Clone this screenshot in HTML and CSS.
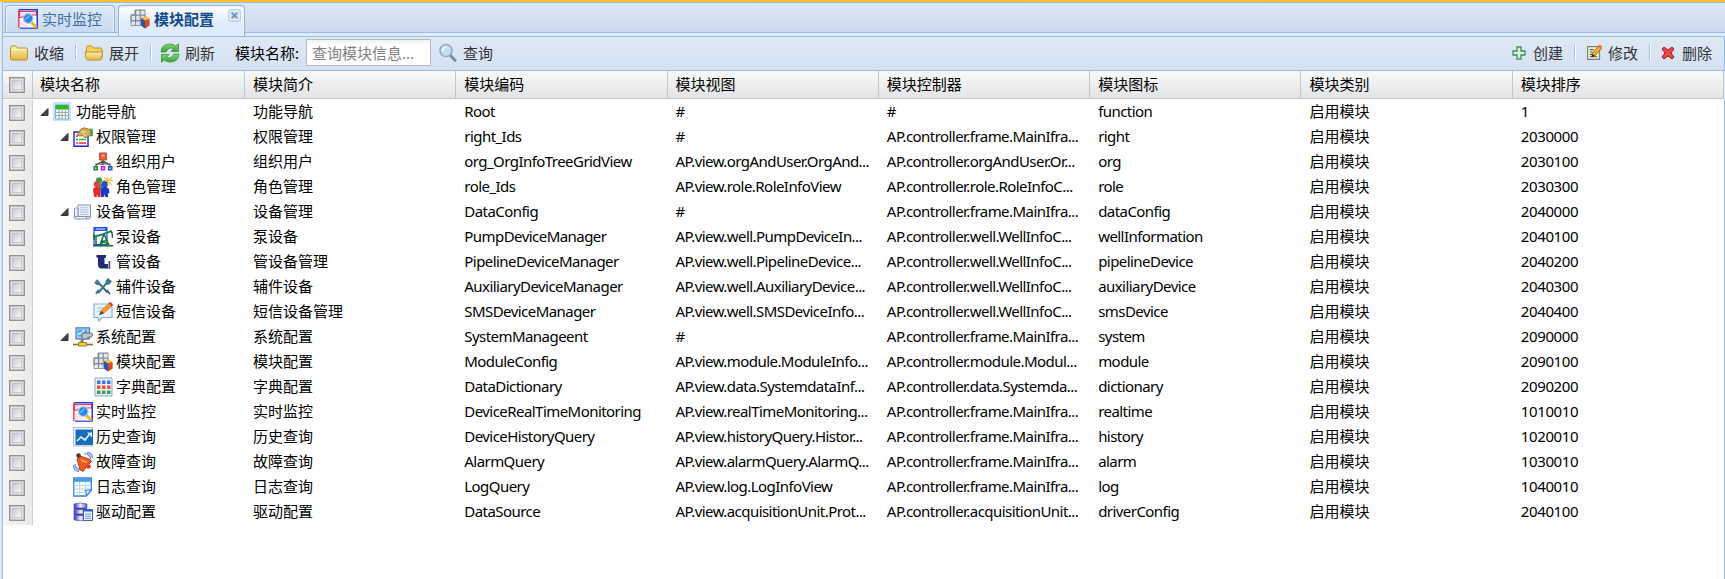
FILE: index.html
```
<!DOCTYPE html>
<html lang="zh-CN">
<head>
<meta charset="utf-8">
<title>模块配置</title>
<link rel="stylesheet" href="styles.css">
</head>
<body>
<svg class="sprites" aria-hidden="true">
<defs>
<linearGradient id="gFolder" x1="0" y1="0" x2="0" y2="1"><stop offset="0" stop-color="#fdf3b4"/><stop offset="1" stop-color="#e3b542"/></linearGradient>
<linearGradient id="gGreen" x1="0" y1="0" x2="0" y2="1"><stop offset="0" stop-color="#8bd672"/><stop offset="1" stop-color="#35a13c"/></linearGradient>
<linearGradient id="gBox" x1="0" y1="0" x2="1" y2="1"><stop offset="0" stop-color="#c3c8d0"/><stop offset="1" stop-color="#fafafa"/></linearGradient>
<linearGradient id="gDisk" x1="0" y1="0" x2="1" y2="0"><stop offset="0" stop-color="#2a2bd0"/><stop offset=".5" stop-color="#eeeefa"/><stop offset="1" stop-color="#5a5ab8"/></linearGradient>
</defs>
<symbol id="check" viewBox="0 0 16 16"><rect x=".75" y=".75" width="14.5" height="14.5" fill="#f1f1f1" stroke="#8e8f8f" stroke-width="1.4"/><rect x="3.2" y="3.2" width="9.6" height="9.6" fill="url(#gBox)" stroke="#b4b9c0" stroke-width=".9"/></symbol>
<symbol id="arrow" viewBox="0 0 20 20"><path d="M15 6.500v7H8z" fill="#444" stroke="#333" stroke-width="1" stroke-linejoin="round"/></symbol>
<symbol id="realtime" viewBox="0 0 20 20"><path d="M.8.8h18.4v18.400H.8z" fill="#fff"/><path d="M1.500 2.500h17v3.500H8L3 8.500H1.500z" fill="#ffe3ea" stroke="#f4375c" stroke-width="1.100"/><path d="M1.500 11.500l4 .5 5 6.500h-9z" fill="#ffe3ea"/><path d="M.8 19V.8" stroke="#f02b50" stroke-width="1.300"/><path d="M1 .8h18.200V19" fill="none" stroke="#2438e8" stroke-width="1.500"/><path d="M2 19.200h17.500" stroke="#2438e8" stroke-width="1.200"/><path d="M13 13l5.500 5.500" stroke="#eeb31f" stroke-width="3"/><circle cx="10.200" cy="9.500" r="4.800" fill="#2f80df" stroke="#9fd0f7" stroke-width="1.300"/><path d="M7.200 10.500q2.500-1 4-4" stroke="#78c5ff" stroke-width="1.500" fill="none"/></symbol>
<symbol id="module" viewBox="0 0 20 20"><path d="M5 1h10v12H1V6h4z" fill="#b9c2cd" stroke="#7d8998"/><path d="M5.500 1v16M10 1v16M1 6h14M1 11.500h14" stroke="#7d8998" stroke-width="1.200"/><path d="M1 6h14v10.500H1z" fill="none" stroke="#8d98a6"/><path d="M2 7h3v4H2zM6.500 2h3v3.500h-3zM11 2h3.500v3.500H11zM6.500 7h3v4h-3zM11 7h3.500v4H11zM2 12.500h3V16H2zM6.500 12.500h3V16h-3z" fill="#e3e8ee"/><path d="M11 9l4.500-1.700L19.500 10v6.500L15 19.500 11 16.500z" fill="#e9a027"/><path d="M11 9l4 2.500v8l-4-3z" fill="#2855b5"/><path d="M15 11.500l4.500-1.500v6.500L15 19.500z" fill="#d84b22"/><path d="M12 9l3.500-1.300 3.200 2-3.500 1.300z" fill="#ffc445"/></symbol>
<symbol id="folder" viewBox="0 0 20 20"><path d="M1.500 15.500V4.500q0-1.500 1.500-1.500h4l1.500 2h8.500q1.500 0 1.500 1.500v9q0 1.500-1.500 1.500H3q-1.500 0-1.500-1.500z" fill="url(#gFolder)" stroke="#bd8d26"/><path d="M2.500 6.500h15" stroke="#fff9d0"/></symbol>
<symbol id="folderopen" viewBox="0 0 20 20"><path d="M2.500 15V4.500q0-1.500 1.500-1.500h4l1.500 2h7q1.500 0 1.500 1.500V15z" fill="#f4d267" stroke="#bd8d26"/><path d="M1 9h15.500l2.300-.5-1.300 7.500q-.2 1-1.500 1H4q-1.500 0-1.800-1.200z" fill="url(#gFolder)" stroke="#bd8d26"/></symbol>
<symbol id="refresh" viewBox="0 0 20 20"><path d="M1 9Q1.500 1 10 1q3.500 0 5.500 2L18.500.8V8.500H11l2.500-2.700Q9 3.500 6 9z" fill="url(#gGreen)" stroke="#34943d" stroke-width=".8"/><path d="M19 11q-.5 8-9 8-3.500 0-5.500-2l-3 2.200V11.500H9L6.500 14.200Q11 16.500 14 11z" fill="url(#gGreen)" stroke="#34943d" stroke-width=".8"/></symbol>
<symbol id="search" viewBox="0 0 20 20"><path d="M12 12l6 6.300" stroke="#7d899a" stroke-width="2.800"/><circle cx="8" cy="7.500" r="6" fill="#bfe0f8" stroke="#98a9bd" stroke-width="1.700"/><path d="M4.500 8q0-3.500 4-4" stroke="#fff" stroke-width="1.600" fill="none"/></symbol>
<symbol id="plus" viewBox="0 0 14 14"><path d="M5 1h4v4h4v4H9v4H5V9H1V5h4z" fill="#d8f1e0" stroke="#3e9358" stroke-width="1.300"/></symbol>
<symbol id="edit" viewBox="0 0 18 18"><path d="M1.700 2.700h12.600v13.600H1.700z" fill="#fbf5cf" stroke="#75818a" stroke-width="1.300"/><path d="M4 6h4M4 8.500h3M4 11h3M4 13.500h8" stroke="#4b5965" stroke-width="1.200"/><path d="M6 13.500l.8-4L13.500 2l3 2.500-6.700 8z" fill="#f4a92d" stroke="#7c641f" stroke-width=".8"/><path d="M12.500 3L14 .8q1.500-.6 3.200 1.700L15.500 5z" fill="#f17622"/><path d="M6 14l.8-3.500 2.500 2z" fill="#222"/></symbol>
<symbol id="delete" viewBox="0 0 14 14"><path d="M1 3l2-2 4 3 4-3 2 2-3 4 3 4-2 2-4-3-4 3-2-2 3-4z" fill="#e54746" stroke="#a51d23"/></symbol>
<symbol id="function" viewBox="0 0 20 20"><path d="M0 0h18v19H0z" fill="#c4e2f9"/><path d="M2.500 3h13v14h-13z" fill="#f6fcff" stroke="#82afd4"/><path d="M2.500 3h13v4.500h-13z" fill="#32b42e"/><path d="M3 10.500h12M3 13.500h12M6 8v9M9.200 8v9M12.400 8v9" stroke="#9aada8" stroke-width="1.100"/></symbol>
<symbol id="right" viewBox="0 0 20 20"><path d="M1 5h14v14.200H1z" fill="#fff" stroke="#2320e3" stroke-width="1.400"/><path d="M3 9h2M3 16h2" stroke="#e33b40" stroke-width="1.500"/><path d="M3 12.500h2" stroke="#15a525" stroke-width="1.500"/><path d="M6 12.500h7" stroke="#26bf36" stroke-width="1.500"/><path d="M6 16h7" stroke="#e8252a" stroke-width="1.500"/><path d="M4.500 7.500L8 2q3-2.500 7 0l4.500 1v5.500L16 9l-4 1.800-2-2.300-4 .5z" fill="#d2ad55" stroke="#806530" stroke-width=".8"/><path d="M17 1.500h2.500v8l-2.500-1z" fill="#5aa451"/><path d="M8 5h5M10 7l3 2" stroke="#fff0a0" stroke-width="1"/></symbol>
<symbol id="org" viewBox="0 0 20 20"><path d="M10 7v6M3 15v-3h14v3M10 9l-7 4M10 9l7 4" fill="none" stroke="#454850" stroke-width="1.200"/><path d="M6.700 1h6.600v7H6.700z" fill="#f06338" stroke="#b33a20" stroke-width="1"/><path d="M8.500 2.500h3v2h-3z" fill="#ffb38e"/><path d="M.5 14h4.500v4.500H.5z" fill="#16863b"/><path d="M7.700 14h4.600v4.500H7.700z" fill="#d320dd"/><path d="M15 14h4.500v4.500H15z" fill="#2151d8"/><path d="M2 15.500h1.500v1.500H2zM9.200 15.500h1.500v1.500H9.200zM16.500 15.500H18v1.500h-1.500z" fill="#e0e0f8"/></symbol>
<symbol id="role" viewBox="0 0 20 20"><path d="M14.500 0v9M10 3.500h10M11 0l8 8M19 0l-7 7" stroke="#f5c143" stroke-width="1.200"/><circle cx="6" cy="3.300" r="3.100" fill="#37994a"/><path d="M2 7q4-2 7 0v5H2z" fill="#41a654"/><circle cx="3.700" cy="7.200" r="3" fill="#e64240"/><path d="M0 12q3.500-4 7.500-.5V20H4.800l-.7-3-.6 3H1z" fill="#e7282c"/><circle cx="11.500" cy="7.200" r="3.200" fill="#3549c5"/><path d="M7.500 12q4-4.500 8.500 0l.5 4-1.500.5V20h-3l-.5-3-.8 3H8z" fill="#1d38c4"/></symbol>
<symbol id="dataConfig" viewBox="0 0 20 20"><path d="M5 3h12.500v12H5z" fill="#e9f1fa" stroke="#8596ac"/><path d="M7 5.700h8.500M7 8h8.500M7 10.300h8.500M7 12.500h8.500" stroke="#afc2d9" stroke-width="1"/><path d="M1.500 14.500V7q0-1 1-1H5v8.500zM1.500 14.500h12v2.500H3q-1.500 0-1.500-1.500zM13.500 14.500h4q0 2.500-2 2.500h-2z" fill="#e9f1fa" stroke="#8596ac"/></symbol>
<symbol id="well" viewBox="0 0 20 20"><path d="M1 .7h13v17H1z" fill="#f5fbff" stroke="#2447e3" stroke-width="1.200"/><path d="M1 1h13v3H1z" fill="#2558e8"/><path d="M3 2h9" stroke="#a9d0ff" stroke-width="1.300"/><path d="M3 8h9" stroke="#75aadf"/><path d="M1 13V8l2 1.500 13-4.500 2-1q1.500 1.500 1.500 7M11 7l-4 11M11 7l5 11M8.500 13l6 4M14 12l-6 5M3 10v8" fill="none" stroke="#17713a" stroke-width="1.500"/><path d="M0 18.800h20" stroke="#15683a" stroke-width="1.500"/></symbol>
<symbol id="pipe" viewBox="0 0 20 20"><path d="M3.500 3H13v2.700h-1.500V12H15v4.500H8q-3-.5-3-4V5.700H3.500z" fill="#252a76"/><path d="M15.500 9h1.800v8h-1.800z" fill="#4b5499"/></symbol>
<symbol id="tools" viewBox="0 0 20 20"><path d="M5 5l9.500 10.500M15.500 4L5 16" stroke="#42718b" stroke-width="2"/><path d="M3.300 3l2 2.200.2 1.800-1.800-.3L2 4.800M13 5l2-2.500 2.500 2-1.800 2.300-2.200-.3M6 13l-3 3.500M13.500 13l3.500 4.200" stroke="#37738f" stroke-width="2" fill="none"/></symbol>
<symbol id="sms" viewBox="0 0 20 20"><path d="M1 2h18v13.500H9L6 19l-1-3.500H1z" fill="#eaf4ff" stroke="#7fb0e7" stroke-width="1.200"/><path d="M4 6h8M4 9h4" stroke="#9ebce0"/><path d="M7 12l1.500-4 8-7L19 4l-8 7z" fill="#f59b26" stroke="#cf7222" stroke-width=".7"/><path d="M15.500 1l1.500-1q2 .5 3 3L18.500 4.500z" fill="#d73c48"/><path d="M5.500 13.500l3-4.500 2.500 2z" fill="#51442f"/></symbol>
<symbol id="system" viewBox="0 0 20 20"><path d="M3 .8h13.500v11H3z" fill="#a6d8fa" stroke="#5277b1" stroke-width="1.200"/><path d="M4.500 2.500h9.500v7H4.500z" fill="#44aef4"/><path d="M5 7q4 0 6-4" stroke="#c4f1ff" stroke-width="2"/><path d="M9 6h8.500q2 0 2 2t-2 2h-2l-1.500 2H9z" fill="#c1c6ce" stroke="#656b77"/><path d="M9 12.500v4" stroke="#777" stroke-width="3"/><path d="M0 17.500h20" stroke="#7c7452" stroke-width="1.700"/><path d="M5.500 15.500h8v3.500h-8z" fill="#f5cd2a" stroke="#a38018"/></symbol>
<symbol id="dict" viewBox="0 0 20 20"><path d="M2 1h17v18H2z" fill="#e8f3fa" stroke="#8aa8bf"/><path d="M4 3.500h3.500v3.500H4zM9 3.500h3.500v3.500H9zM14 3.500h3.500v3.500H14z" fill="#3e76d9"/><path d="M4 8.500h3.500V12H4zM9 8.500h3.500V12H9zM14 8.500h3.500V12H14z" fill="#ed5140"/><path d="M4 13.500h3.500V17H4zM9 13.500h3.500V17H9zM14 13.500h3.500V17H14z" fill="#439d59"/></symbol>
<symbol id="history" viewBox="0 0 20 20"><path d="M.5.5h19.500v18.500H.5z" fill="#eef3f6" stroke="#b4bdc6"/><path d="M2.500 2.500H20v15.500H2.500z" fill="#176dbb"/><path d="M4 14l4-4 4 3 5-6.500" fill="none" stroke="#d9edff" stroke-width="1.700"/><path d="M14 5.500h5v5z" fill="#d9edff"/></symbol>
<symbol id="alarm" viewBox="0 0 20 20"><path d="M11.500 1.500q5 0 6.500 6M14 0q5 1 5.500 6M2 12q0 5 6 6M0 13q1 6 6 6.500" fill="none" stroke="#6f91e6" stroke-width="1.500"/><path d="M4 7l3-3 9 3 2.500 2.500-2 2-3 1-1 4-2.500 3-3-2z" fill="#f15b22" stroke="#b93d18"/><circle cx="5.500" cy="3.500" r="2.300" fill="#57322d"/><path d="M8 8l6 2.500" stroke="#ff9b4b" stroke-width="2"/><circle cx="15.500" cy="14.500" r="2.300" fill="#e73323"/></symbol>
<symbol id="log" viewBox="0 0 20 20"><path d="M.8 1h17.500v12.500l-5 5.500H.8z" fill="#f7fcff" stroke="#3b83df" stroke-width="1.300"/><path d="M1 1.300h17v3.500H1z" fill="#449cef"/><path d="M1 8.500h17M1 12h16M1 15.500h12M6.500 5v13.500M12.500 5v13.500" stroke="#bdd9f2"/><path d="M18.300 12.500l-5 6.500q.7-4.500-1.500-5.500z" fill="#d3e9fd" stroke="#3b83df"/></symbol>
<symbol id="driver" viewBox="0 0 20 20"><path d="M1 2q6-2 13 0v4H1zM1 7.500h13v4.500H1zM1 13.500h13V18q-6 1.500-13 0z" fill="url(#gDisk)" stroke="#5557b0" stroke-width=".7"/><path d="M1 6.800h13M1 12.800h13" stroke="#41457b" stroke-width="1.500"/><path d="M10.500 7.500h9v11h-9z" fill="#eef5ff" stroke="#3c62c7"/><path d="M10.500 8.500h9" stroke="#255ce3" stroke-width="2"/><path d="M12 12h6M12 14.200h6M12 16.400h6" stroke="#6d98d8"/></symbol>
</svg>

<div class="viewport">
  <nav class="tabs">
    <div class="tab"><svg class="icon"><use href="#realtime"/></svg><span>实时监控</span></div>
    <div class="tab active"><svg class="icon"><use href="#module"/></svg><span>模块配置</span>
      <svg class="close" viewBox="0 0 14 14"><rect x=".5" y=".5" width="13" height="13" rx="3" fill="#dce9f8" stroke="#adc6e4"/><path d="M4 4l6 6M10 4l-6 6" stroke="#7c95b2" stroke-width="2.200"/></svg></div>
  </nav>
  <div class="strip"></div>
  <div class="toolbar">
    <button class="btn b-collapse"><svg class="icon"><use href="#folder"/></svg>收缩</button>
    <i class="sep"></i>
    <button class="btn b-expand"><svg class="icon"><use href="#folderopen"/></svg>展开</button>
    <i class="sep"></i>
    <button class="btn b-refresh"><svg class="icon"><use href="#refresh"/></svg>刷新</button>
    <label class="label" for="q">模块名称:</label>
    <input class="field" id="q" placeholder="查询模块信息...">
    <button class="btn b-search"><svg class="icon"><use href="#search"/></svg>查询</button>
    <div class="actions">
      <button class="btn b-add"><svg class="icon"><use href="#plus"/></svg>创建</button>
      <i class="sep"></i>
      <button class="btn b-edit"><svg class="icon"><use href="#edit"/></svg>修改</button>
      <i class="sep"></i>
      <button class="btn b-del"><svg class="icon"><use href="#delete"/></svg>删除</button>
    </div>
  </div>
  <div class="row head"><div class="sel"><svg class="check"><use href="#check"/></svg></div><div>模块名称</div><div>模块简介</div><div>模块编码</div><div>模块视图</div><div>模块控制器</div><div>模块图标</div><div>模块类别</div><div>模块排序</div></div>
  <div class="body">
    <div class="row"><div class="sel"><svg class="check"><use href="#check"/></svg></div><div class="tree"><svg class="icon"><use href="#arrow"/></svg><svg class="icon"><use href="#function"/></svg><span>功能导航</span></div><div>功能导航</div><div>Root</div><div>#</div><div>#</div><div>function</div><div>启用模块</div><div>1</div></div>
    <div class="row"><div class="sel"><svg class="check"><use href="#check"/></svg></div><div class="tree l1"><svg class="icon"><use href="#arrow"/></svg><svg class="icon"><use href="#right"/></svg><span>权限管理</span></div><div>权限管理</div><div>right_Ids</div><div>#</div><div>AP.controller.frame.MainIfra...</div><div>right</div><div>启用模块</div><div>2030000</div></div>
    <div class="row"><div class="sel"><svg class="check"><use href="#check"/></svg></div><div class="tree l3"><svg class="icon"><use href="#org"/></svg><span>组织用户</span></div><div>组织用户</div><div>org_OrgInfoTreeGridView</div><div>AP.view.orgAndUser.OrgAnd...</div><div>AP.controller.orgAndUser.Or...</div><div>org</div><div>启用模块</div><div>2030100</div></div>
    <div class="row"><div class="sel"><svg class="check"><use href="#check"/></svg></div><div class="tree l3"><svg class="icon"><use href="#role"/></svg><span>角色管理</span></div><div>角色管理</div><div>role_Ids</div><div>AP.view.role.RoleInfoView</div><div>AP.controller.role.RoleInfoC...</div><div>role</div><div>启用模块</div><div>2030300</div></div>
    <div class="row"><div class="sel"><svg class="check"><use href="#check"/></svg></div><div class="tree l1"><svg class="icon"><use href="#arrow"/></svg><svg class="icon"><use href="#dataConfig"/></svg><span>设备管理</span></div><div>设备管理</div><div>DataConfig</div><div>#</div><div>AP.controller.frame.MainIfra...</div><div>dataConfig</div><div>启用模块</div><div>2040000</div></div>
    <div class="row"><div class="sel"><svg class="check"><use href="#check"/></svg></div><div class="tree l3"><svg class="icon"><use href="#well"/></svg><span>泵设备</span></div><div>泵设备</div><div>PumpDeviceManager</div><div>AP.view.well.PumpDeviceIn...</div><div>AP.controller.well.WellInfoC...</div><div>wellInformation</div><div>启用模块</div><div>2040100</div></div>
    <div class="row"><div class="sel"><svg class="check"><use href="#check"/></svg></div><div class="tree l3"><svg class="icon"><use href="#pipe"/></svg><span>管设备</span></div><div>管设备管理</div><div>PipelineDeviceManager</div><div>AP.view.well.PipelineDevice...</div><div>AP.controller.well.WellInfoC...</div><div>pipelineDevice</div><div>启用模块</div><div>2040200</div></div>
    <div class="row"><div class="sel"><svg class="check"><use href="#check"/></svg></div><div class="tree l3"><svg class="icon"><use href="#tools"/></svg><span>辅件设备</span></div><div>辅件设备</div><div>AuxiliaryDeviceManager</div><div>AP.view.well.AuxiliaryDevice...</div><div>AP.controller.well.WellInfoC...</div><div>auxiliaryDevice</div><div>启用模块</div><div>2040300</div></div>
    <div class="row"><div class="sel"><svg class="check"><use href="#check"/></svg></div><div class="tree l3"><svg class="icon"><use href="#sms"/></svg><span>短信设备</span></div><div>短信设备管理</div><div>SMSDeviceManager</div><div>AP.view.well.SMSDeviceInfo...</div><div>AP.controller.well.WellInfoC...</div><div>smsDevice</div><div>启用模块</div><div>2040400</div></div>
    <div class="row"><div class="sel"><svg class="check"><use href="#check"/></svg></div><div class="tree l1"><svg class="icon"><use href="#arrow"/></svg><svg class="icon"><use href="#system"/></svg><span>系统配置</span></div><div>系统配置</div><div>SystemManageent</div><div>#</div><div>AP.controller.frame.MainIfra...</div><div>system</div><div>启用模块</div><div>2090000</div></div>
    <div class="row"><div class="sel"><svg class="check"><use href="#check"/></svg></div><div class="tree l3"><svg class="icon"><use href="#module"/></svg><span>模块配置</span></div><div>模块配置</div><div>ModuleConfig</div><div>AP.view.module.ModuleInfo...</div><div>AP.controller.module.Modul...</div><div>module</div><div>启用模块</div><div>2090100</div></div>
    <div class="row"><div class="sel"><svg class="check"><use href="#check"/></svg></div><div class="tree l3"><svg class="icon"><use href="#dict"/></svg><span>字典配置</span></div><div>字典配置</div><div>DataDictionary</div><div>AP.view.data.SystemdataInf...</div><div>AP.controller.data.Systemda...</div><div>dictionary</div><div>启用模块</div><div>2090200</div></div>
    <div class="row"><div class="sel"><svg class="check"><use href="#check"/></svg></div><div class="tree l2"><svg class="icon"><use href="#realtime"/></svg><span>实时监控</span></div><div>实时监控</div><div>DeviceRealTimeMonitoring</div><div>AP.view.realTimeMonitoring...</div><div>AP.controller.frame.MainIfra...</div><div>realtime</div><div>启用模块</div><div>1010010</div></div>
    <div class="row"><div class="sel"><svg class="check"><use href="#check"/></svg></div><div class="tree l2"><svg class="icon"><use href="#history"/></svg><span>历史查询</span></div><div>历史查询</div><div>DeviceHistoryQuery</div><div>AP.view.historyQuery.Histor...</div><div>AP.controller.frame.MainIfra...</div><div>history</div><div>启用模块</div><div>1020010</div></div>
    <div class="row"><div class="sel"><svg class="check"><use href="#check"/></svg></div><div class="tree l2"><svg class="icon"><use href="#alarm"/></svg><span>故障查询</span></div><div>故障查询</div><div>AlarmQuery</div><div>AP.view.alarmQuery.AlarmQ...</div><div>AP.controller.frame.MainIfra...</div><div>alarm</div><div>启用模块</div><div>1030010</div></div>
    <div class="row"><div class="sel"><svg class="check"><use href="#check"/></svg></div><div class="tree l2"><svg class="icon"><use href="#log"/></svg><span>日志查询</span></div><div>日志查询</div><div>LogQuery</div><div>AP.view.log.LogInfoView</div><div>AP.controller.frame.MainIfra...</div><div>log</div><div>启用模块</div><div>1040010</div></div>
    <div class="row"><div class="sel"><svg class="check"><use href="#check"/></svg></div><div class="tree l2"><svg class="icon"><use href="#driver"/></svg><span>驱动配置</span></div><div>驱动配置</div><div>DataSource</div><div>AP.view.acquisitionUnit.Prot...</div><div>AP.controller.acquisitionUnit...</div><div>driverConfig</div><div>启用模块</div><div>2040100</div></div>
  </div>
</div>
</body>
</html>
```
FILE: styles.css
```
* { box-sizing: border-box; }
body { margin: 0; overflow: hidden; background: #dfe8f6; color: #000; font: 15px/20px "Noto Sans", "Noto Sans CJK SC", sans-serif; }
.sprites { position: absolute; width: 0; height: 0; }
.icon { width: 20px; height: 20px; flex: none; display: block; }
.viewport { width: 1725px; height: 579px; border-top: 2px solid #fdbe2c; display: flex; flex-direction: column; padding-left: 2px; }
.tabs { height: 31px; flex: none; border: solid #99bce8; border-width: 1px 0 1px 1px; background: linear-gradient(#dde8f5, #cbdaee); display: flex; gap: 3px; padding: 2px 0 0 2px; }
.tab { height: 27px; width: 110px; border: 1px solid #8db2e3; border-bottom: 0; border-radius: 4px 4px 0 0; background: linear-gradient(#dce9f8, #c8daf1); box-shadow: inset 1px 1px #eef5fd, inset -1px 0 #eef5fd; color: #416da3; display: flex; padding: 3px 0 0 12px; gap: 4px; line-height: 20px; }
.tab.active { height: 31px; width: 127px; padding-left: 11px; background: linear-gradient(#fff, #deecfd 60%); color: #15498b; font-weight: bold; position: relative; }
.close { position: absolute; right: 3px; top: 3px; width: 13px; height: 13px; }
.strip { height: 4px; flex: none; background: #deecfd; border-bottom: 1px solid #99bce8; border-left: 1px solid #99bce8; }
.toolbar { height: 34px; flex: none; border: solid #99bce8; border-width: 0 1px 1px; background: linear-gradient(#dfe9f5, #d3e1f1); display: flex; align-items: center; padding: 0 12px 2px 6px; }
.btn { border: 0; padding: 0; background: none; font: inherit; color: #333; display: flex; align-items: center; gap: 5px; }
.sep { width: 2px; height: 17px; border-left: 1px solid #98c8ff; border-right: 1px solid #fff; margin: 0 8px 0 11px; }
.b-expand { margin-left: -1px; }
.label { margin: 0 7px 0 20px; }
.field { width: 125px; height: 27px; border: 1px solid #b5b8c8; background: linear-gradient(#f1f1f1, #fff 5px); padding: 0 5px; font: inherit; }
.field::placeholder { color: #808080; opacity: 1; }
.b-search { margin-left: 7px; }
.actions { margin-left: auto; display: flex; align-items: center; }
.actions .sep { margin-right: 10px; }
.b-add .icon, .b-del .icon { width: 14px; height: 14px; }
.b-add, .b-del { gap: 7px; }
.b-edit .icon { width: 17px; height: 17px; }
.row { height: 25px; display: grid; grid-template-columns: 30px 212px repeat(7, 1fr); }
.row > div { padding-left: 8px; line-height: 23px; white-space: nowrap; overflow: hidden; }
.body .row > div:nth-child(n+4):nth-child(-n+7) { letter-spacing: -.55px; }
.body .row > div:nth-child(9) { letter-spacing: -.35px; }
.row > .sel { padding: 5px 0 0 6px; background: linear-gradient(90deg, #f4f4f4, #e9e9e9); border-right: 1px solid #d0d0d0; }
.check { width: 16px; height: 16px; display: block; }
.head { height: 28px; flex: none; margin-right: 1px; border-left: 1px solid #99bce8; border-bottom: 1px solid #c5c5c5; background: linear-gradient(#f9f9f9, #e3e4e6); }
.head > div { border-right: 1px solid #c5c5c5; line-height: 27px; }
.head > div:nth-child(2) { padding-left: 7px; }
.head > .sel { padding-top: 6px; background: none; border-color: #c5c5c5; }
.body { flex: 1; background: #fff; border: solid #99bce8; border-width: 0 1px; padding-top: 1px; }
.row > .tree { padding-left: 0; display: flex; }
.tree .icon { margin-top: 2px; }
.tree span { padding-left: 3px; }
.row > .l1 { padding-left: 20px; }
.row > .l2 { padding-left: 40px; }
.row > .l3 { padding-left: 60px; }
```
